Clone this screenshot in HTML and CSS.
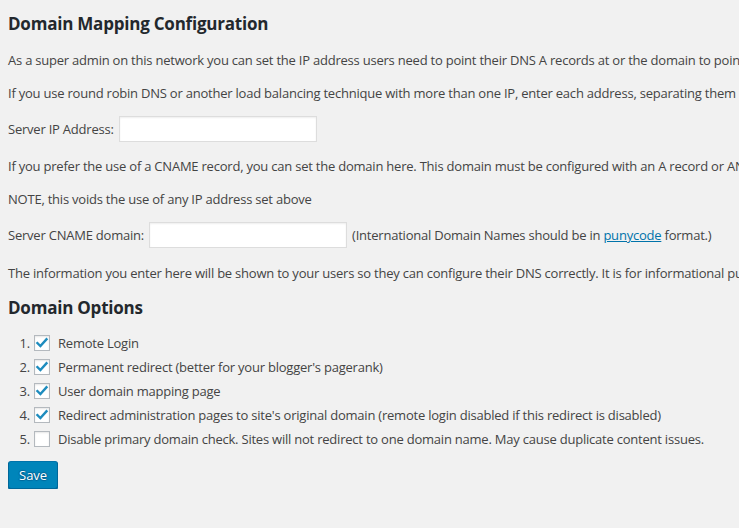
FILE: index.html
```html
<!DOCTYPE html>
<html>
<head>
<meta charset="utf-8">
<link rel="stylesheet" href="styles.css">
</head>
<body>
<div class="wrap">
  <h3 class="title">Domain Mapping Configuration</h3>
  <p class="line">As a super admin on this network you can set the IP address users need to point their DNS A records at or the domain to point their CNAME record at.</p>
  <p class="line">If you use round robin DNS or another load balancing technique with more than one IP, enter each address, separating them by commas.</p>
  <p class="field"><span class="label">Server IP Address:</span><span class="input"></span></p>
  <p class="line">If you prefer the use of a CNAME record, you can set the domain here. This domain must be configured with an A record or ANAME pointing at an IP address.</p>
  <p class="line">NOTE, this voids the use of any IP address set above</p>
  <p class="field"><span class="label">Server CNAME domain:</span><span class="input"></span><span class="hint">(International Domain Names should be in <a href="#">punycode</a> format.)</span></p>
  <p class="line after">The information you enter here will be shown to your users so they can configure their DNS correctly. It is for informational purposes only.</p>
  <h3 class="title second">Domain Options</h3>
  <ol class="options">
    <li><span class="cb"><svg viewBox="0 0 16 16" width="16" height="16"><path d="M3.4 8.1 L6.4 11.1 L12.5 4.3" fill="none" stroke="#1e8cbe" stroke-width="2.4" stroke-linecap="square"/></svg></span><span class="opt">Remote Login</span></li>
    <li><span class="cb"><svg viewBox="0 0 16 16" width="16" height="16"><path d="M3.4 8.1 L6.4 11.1 L12.5 4.3" fill="none" stroke="#1e8cbe" stroke-width="2.4" stroke-linecap="square"/></svg></span><span class="opt">Permanent redirect (better for your blogger's pagerank)</span></li>
    <li><span class="cb"><svg viewBox="0 0 16 16" width="16" height="16"><path d="M3.4 8.1 L6.4 11.1 L12.5 4.3" fill="none" stroke="#1e8cbe" stroke-width="2.4" stroke-linecap="square"/></svg></span><span class="opt">User domain mapping page</span></li>
    <li><span class="cb"><svg viewBox="0 0 16 16" width="16" height="16"><path d="M3.4 8.1 L6.4 11.1 L12.5 4.3" fill="none" stroke="#1e8cbe" stroke-width="2.4" stroke-linecap="square"/></svg></span><span class="opt">Redirect administration pages to site's original domain (remote login disabled if this redirect is disabled)</span></li>
    <li><span class="cb"></span><span class="opt">Disable primary domain check. Sites will not redirect to one domain name. May cause duplicate content issues.</span></li>
  </ol>
  <div class="actions"><span class="button">Save</span></div>
</div>
</body>
</html>
```
FILE: styles.css
```css
html, body {
  margin: 0;
  padding: 0;
  background: #f1f1f1;
  overflow: hidden;
}
body {
  font-family: "Open Sans", "Noto Sans", sans-serif;
  font-size: 13px;
  line-height: 20px;
  color: #444;
  letter-spacing: -0.22px;
}
.wrap {
  padding: 0 0 0 8px;
  width: 1400px;
}
.title {
  font-size: 17px;
  font-weight: 700;
  color: #23282d;
  margin: 13px 0 0;
  line-height: 22px;
}
.title.second { margin-top: 14px; }
.line {
  margin: 13px 0 0;
  white-space: nowrap;
}
.title + .line { margin-top: 15px; }
.line.after { margin-top: 14px; }
.field {
  margin: 12px 0 0;
  height: 28px;
  display: flex;
  align-items: center;
  white-space: nowrap;
}
.label { margin-right: 5px; }
.input {
  display: block;
  width: 196px;
  height: 24px;
  background: #fff;
  border: 1px solid #ddd;
  box-shadow: inset 0 1px 2px rgba(0,0,0,.07);
}
.hint { margin-left: 5px; }
a { color: #0073aa; text-decoration: underline; }
.options {
  margin: 15px 0 0;
  padding: 0;
  list-style: none;
  counter-reset: item;
}
.options li {
  counter-increment: item;
  display: flex;
  align-items: center;
  margin-bottom: 6px;
  height: 18px;
  line-height: 18px;
  white-space: nowrap;
}
.options li::before {
  content: counter(item) ".";
  width: 22px;
  text-align: right;
  flex: none;
}
.cb {
  flex: none;
  width: 14px;
  height: 14px;
  border: 1px solid #b4b9be;
  background: #fff;
  box-shadow: inset 0 1px 2px rgba(0,0,0,.1);
  position: relative;
  margin: 0 8px 0 4px;
}
.cb svg { position: absolute; left: -1px; top: -1px; }
.actions { margin-top: 13px; }
.button {
  display: inline-block;
  height: 26px;
  line-height: 26px;
  padding: 0 10px;
  background: #0085ba;
  border: 1px solid #0073aa;
  border-color: #0073aa #006799 #006799;
  border-radius: 3px;
  box-shadow: 0 1px 0 #006799;
  color: #fff;
  letter-spacing: 0;
  text-shadow: 0 -1px 1px #006799, 1px 0 1px #006799, 0 1px 1px #006799, -1px 0 1px #006799;
}
```
